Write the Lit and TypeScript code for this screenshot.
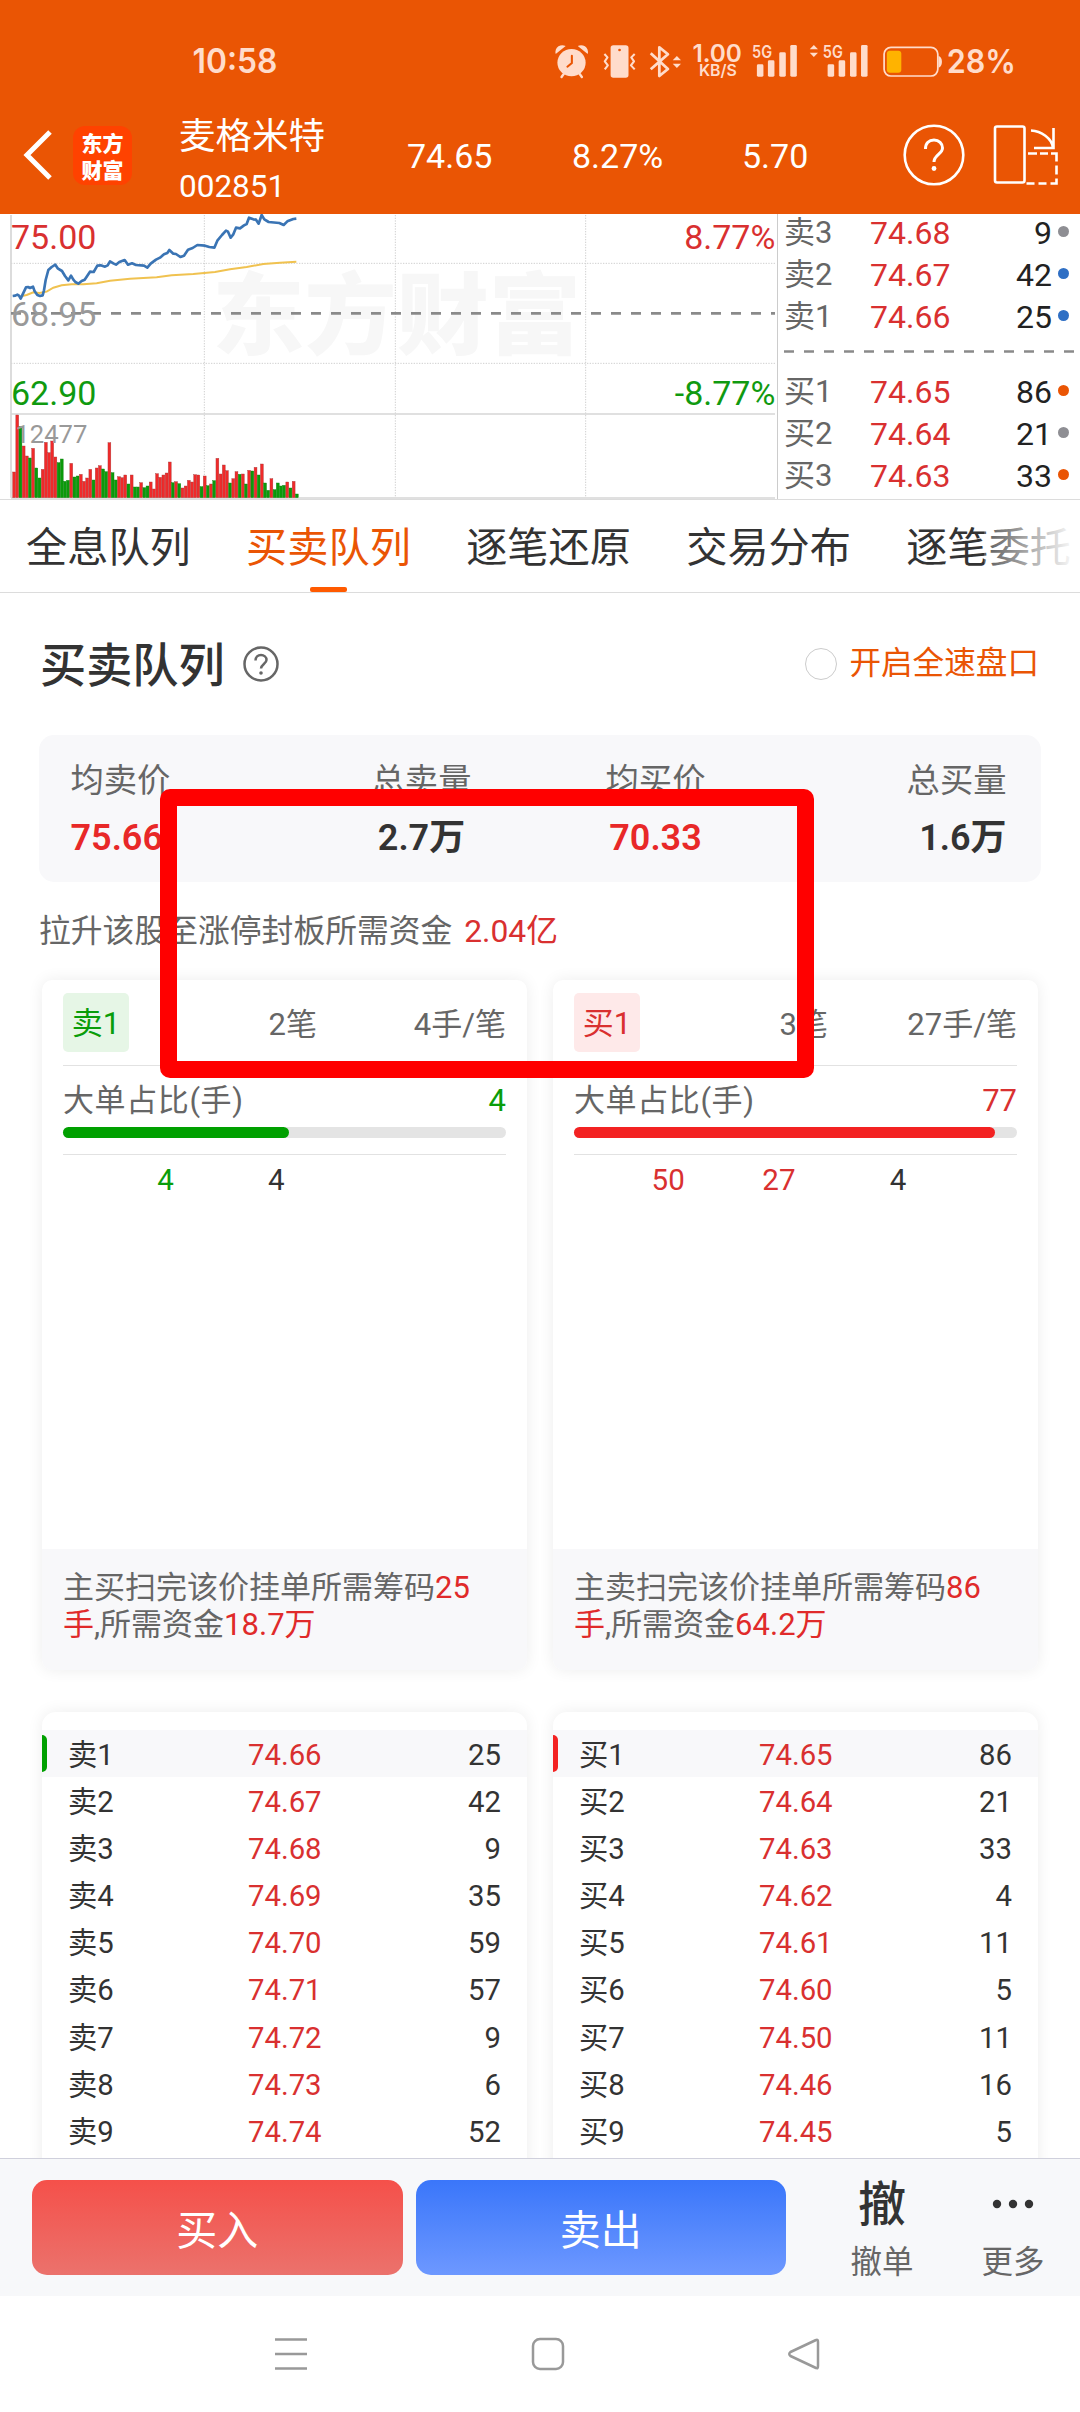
import { LitElement, html, svg, css } from "lit";
import { customElement, property } from "lit/decorators.js";
import { classMap } from "lit/directives/class-map.js";

type Level = { name: string; price: string; qty: string; dot?: string };

const ASKS: Level[] = [
  { name: "卖3", price: "74.68", qty: "9", dot: "#8e8e93" },
  { name: "卖2", price: "74.67", qty: "42", dot: "#2f6fc4" },
  { name: "卖1", price: "74.66", qty: "25", dot: "#2f6fc4" },
];
const BIDS: Level[] = [
  { name: "买1", price: "74.65", qty: "86", dot: "#ea5504" },
  { name: "买2", price: "74.64", qty: "21", dot: "#8e8e93" },
  { name: "买3", price: "74.63", qty: "33", dot: "#ea5504" },
];

const levels = (side: string, rows: [string, string][]): Level[] =>
  rows.map(([price, qty], i) => ({ name: `${side}${i + 1}`, price, qty }));

const ASK_LEVELS = levels("卖", [
  ["74.66", "25"], ["74.67", "42"], ["74.68", "9"], ["74.69", "35"], ["74.70", "59"],
  ["74.71", "57"], ["74.72", "9"], ["74.73", "6"], ["74.74", "52"],
]);
const BID_LEVELS = levels("买", [
  ["74.65", "86"], ["74.64", "21"], ["74.63", "33"], ["74.62", "4"], ["74.61", "11"],
  ["74.60", "5"], ["74.50", "11"], ["74.46", "16"], ["74.45", "5"],
]);

// Volume per minute: r = up, g = down, number = top edge of the bar.
const VOLUME =
  "r801 r630 g665 r723 r753 g759 r730 g789 g819 r793 r712 r743 r708 r756 g773 g762 g829 g826 r775 g816 " +
  "g813 r808 r829 r819 r793 g825 r789 r782 g792 g800 r713 g803 g825 r815 r818 r810 g837 r810 g846 g846 " +
  "r833 g848 g843 r831 r852 r806 r817 r810 r804 r771 g833 r830 g836 r849 r843 r826 r831 r809 r810 g845 " +
  "r813 g842 r837 g827 r760 r807 r780 r797 g834 r821 r800 g808 r807 g837 r796 g798 r787 g810 r777 g834 " +
  "g856 r821 g854 g834 g843 g841 r831 g849 r829 g867";

const PRICE_LINE =
  "38,273 46,272 52,269 57,272 62,281 68,268 78,247 84,246 90,249 99,245 104,259 112,270 120,273 128,271 132,256 137,225 145,195 155,186 166,179 173,190 186,198 195,213 205,226 213,212 220,224 226,231 235,236 245,228 254,224 262,212 270,200 281,201 292,182 302,181 315,185 323,181 330,169 340,175 348,179 358,171 374,165 384,179 396,175 408,180 432,182 442,188 452,176 468,164 480,158 492,148 502,144 508,135 520,146 528,147 541,156 552,152 564,134 578,129 592,120 615,122 628,126 643,128 652,107 666,90 678,77 684,80 692,98 700,88 708,68 720,70 732,61 740,57 747,38 760,43 768,44 776,56 785,30 793,43 806,51 838,54 851,60 862,49 880,42 889,41";
const AVG_LINE =
  "66,273 80,270 100,262 118,264 140,260 160,248 185,241 215,238 250,238 290,235 330,227 390,221 470,217 515,211 580,207 645,201 690,193 740,186 790,177 840,173 889,170";

@customElement("app-status")
export class AppStatus extends LitElement {
  static styles = css`
    :host { display: flex; height: 107px; box-sizing: border-box; padding: 43px 0 0 193px; color: #ffdfcf; }
    .time { width: 362px; }
    svg { display: block; fill: #ffdccb; overflow: visible; }
    .line { fill: none; stroke: #ffdccb; }
    text { font-family: Inter, Roboto, sans-serif; font-weight: 600; }
  `;

  private icon(from: number, to: number, body: unknown) {
    return html`<svg width=${(to - from) / 2.904} height="37" viewBox="${from} 130 ${to - from} 111"
      preserveAspectRatio="none">${body}</svg>`;
  }
  private arrows(x: number, y: number) {
    return svg`<path d="M${x - 12} ${y - 5} L${x} ${y - 18} L${x + 12} ${y - 5} Z M${x - 12} ${y + 5} L${x} ${y + 18} L${x + 12} ${y + 5} Z"/>`;
  }
  private signal(x: number) {
    return svg`
      <text x=${x - 14} y="174" font-size="51" textLength="58" lengthAdjust="spacingAndGlyphs">5G</text>
      <rect x=${x} y="194" width="19" height="37" rx="4"/>
      <rect x=${x + 32} y="182" width="19" height="49" rx="4"/>
      <rect x=${x + 65} y="158" width="19" height="73" rx="4"/>
      <rect x=${x + 97} y="136" width="19" height="95" rx="4"/>`;
  }

  render() {
    return html`
      <div class="time"><svg width="90" height="37" viewBox="0 0 90 37">
        <text x="-0.500" y="30" font-size="33.500" textLength="85" lengthAdjust="spacingAndGlyphs">10:58</text></svg></div>
      ${this.icon(44, 180, svg`
        <circle cx="92" cy="189" r="41"/>
        <path d="M46 163 Q43 148 54 140 Q64 134 75 139 Z M139 163 Q142 148 131 140 Q121 134 110 139 Z"/>
        <path class="line" stroke-width="7" stroke-linecap="round" d="M70 222 L63 232 M115 222 L122 232"/>
        <path d="M93 168 V190 L80 201" fill="none" stroke="#ea5504" stroke-width="6" stroke-linecap="round"/>`)}
      ${this.icon(180, 318, svg`
        <rect x="205" y="137" width="52" height="97" rx="8"/>
        <circle cx="231" cy="151" r="4" fill="#ea5504"/>
        <path class="line" stroke-width="6" stroke-linejoin="round"
          d="M187 163 L196 173 L188 185 L197 197 L188 209 M275 163 L265 173 L273 185 L264 197 L275 209"/>`)}
      ${this.icon(318, 440, svg`
        <path class="line" stroke-width="8" stroke-linejoin="round"
          d="M323 161 L373 208 L348 229 V143 L373 164 L323 209"/>
        ${this.arrows(399, 187)}`)}
      ${this.icon(440, 610, svg`
        <text x="444" y="187" font-size="71" textLength="144" lengthAdjust="spacingAndGlyphs">1.00</text>
        <text x="463" y="230" font-size="48" textLength="110" lengthAdjust="spacingAndGlyphs">KB/S</text>`)}
      ${this.icon(610, 780, this.signal(630))}
      ${this.icon(780, 990, svg`${this.arrows(797, 154)}${this.signal(837)}`)}
      ${this.icon(990, 1180, svg`
        <rect class="line" x="999" y="143" width="156" height="86" rx="20" stroke-width="5"/>
        <rect x="1007" y="153" width="42" height="66" rx="9" fill="#ffb300"/>
        <path d="M1157 168 Q1167 172 1167 186 Q1167 200 1157 204 Z"/>`)}
      ${this.icon(1180, 1400, svg`
        <text x="1182" y="221" font-size="99" textLength="201" lengthAdjust="spacingAndGlyphs">28%</text>`)}
    `;
  }
}

@customElement("app-chart")
export class AppChart extends LitElement {
  static styles = css`
    :host { display: block; width: 777px; height: 285px; }
    svg { display: block; font-family: Roboto, sans-serif; }
    .mark { font: 900 267px "Noto Sans CJK SC", sans-serif; fill: #f7f7f7; }
    .dot { stroke: #cfcfcf; stroke-width: 3; stroke-dasharray: 4 4; }
    .solid { stroke: #d6d6d6; stroke-width: 5; }
    .mid { stroke: #8a8a8a; stroke-width: 8; stroke-dasharray: 30 30; }
    .price { fill: none; stroke: #3a74b4; stroke-width: 8; stroke-linejoin: round; }
    .avg { fill: none; stroke: #f0c250; stroke-width: 6; }
    .r { fill: #f02a2a; stroke: #a83a3a; }
    .g { fill: #0b9a0b; stroke: #0a800a; }
    .bar { stroke-width: 1.2; }
    .big { font-size: 102px; }
    .up { fill: #d93030; }
    .down { fill: #109a10; }
    .flat { fill: #999; }
    .small { font-size: 77px; }
  `;
  render() {
    return html`<svg width="777" height="285" viewBox="0 27 2331 855">
      <text class="mark" x="637" y="425" textLength="1106" lengthAdjust="spacingAndGlyphs">东方财富</text>
      <path class="dot" d="M33 175 H2325 M33 475 H2325 M613 30 V878 M1186 30 V878 M1757 30 V878"/>
      <path class="solid" d="M33 30 V878 M33 627 H2325 M33 879 H2325"/>
      <path class="mid" d="M33 325 H2325"/>
      <polyline class="avg" points=${AVG_LINE}></polyline>
      <polyline class="price" points=${PRICE_LINE}></polyline>
      ${VOLUME.split(" ").map((v, i) => svg`<rect class="bar ${v[0]}" x=${38 + i * 9.53} y=${v.slice(1)}
        width="8.6" height=${878 - Number(v.slice(1))}></rect>`)}
      <text class="big up" x="33" y="132">75.00</text>
      <text class="big flat" x="33" y="362">68.95</text>
      <text class="big down" x="33" y="600">62.90</text>
      <text class="small flat" x="46" y="714">12477</text>
      <text class="big up" x="2326" y="132" text-anchor="end">8.77%</text>
      <text class="big down" x="2326" y="600" text-anchor="end">-8.77%</text>
    </svg>`;
  }
}

@customElement("queue-card")
export class QueueCard extends LitElement {
  @property() side = "sell";
  @property() label = "";
  @property() orders = "";
  @property() average = "";
  @property() big = "";
  @property({ type: Number }) share = 0;
  @property({ type: Array }) lots: { v: string; big: boolean }[] = [];
  @property() action = "";
  @property() hands = "";
  @property() money = "";

  static styles = css`
    :host { display: flex; flex-direction: column; width: 485px; height: 690px; border-radius: 10px; overflow: hidden;
      background: #fff; box-shadow: 0 0 16px rgba(0, 0, 0, .075); color: #666; font-size: 31px; line-height: 38px; }
    .head { display: flex; align-items: center; height: 86px; margin: 0 21px; border-bottom: 1px solid #e2e2e2;
      box-sizing: border-box; }
    .badge { width: 66px; height: 59px; border-radius: 5px; text-align: center; line-height: 61px; }
    .orders { width: 188px; text-align: right; padding-top: 4px; }
    .avg { flex: 1; text-align: right; padding-top: 4px; }
    .ratio { display: flex; justify-content: space-between; margin: 16px 21px 0; height: 45px; }
    .caption { letter-spacing: .6px; }
    .track { margin: 0 21px; height: 11px; border-radius: 6px; background: #e4e4e4; }
    .fill { height: 11px; border-radius: 6px; }
    .lots { display: grid; grid-template-columns: repeat(4, 1fr); margin: 16px 21px 0; padding-top: 6px;
      border-top: 1px solid #e2e2e2; color: #333; text-align: right; font-size: 29.5px; }
    .foot { margin-top: auto; height: 121px; box-sizing: border-box; padding: 20px 30px 0 21px; background: #f8f8fa; line-height: 37px; }
    .red { color: #e02a2a; }
    .sell .num { color: #0a9d0a; }
    .buy .num { color: #d93030; }
    .sell .badge { background: #e6f6e6; color: #0a9d0a; }
    .buy .badge { background: #fee9e9; color: #d93030; }
    .sell .fill { background: #00a000; }
    .buy .fill { background: #f32222; }
    .wrap { display: contents; }
  `;
  render() {
    return html`<div class="wrap ${this.side}">
      <div class="head"><div class="badge">${this.label}</div><div class="orders">${this.orders}</div><div class="avg">${this.average}</div></div>
      <div class="ratio"><span class="caption">大单占比(手)</span><span class="num">${this.big}</span></div>
      <div class="track"><div class="fill" style="width:${this.share}%"></div></div>
      <div class="lots">${this.lots.map((l) => html`<span class=${classMap({ num: l.big })}>${l.v}</span>`)}</div>
      <div class="foot">${this.action}扫完该价挂单所需筹码<span class="red">${this.hands}手</span>,所需资金<span class="red">${this.money}</span></div>
    </div>`;
  }
}

@customElement("level-card")
export class LevelCard extends LitElement {
  @property() side = "sell";
  @property({ type: Array }) rows: Level[] = [];
  static styles = css`
    :host { display: block; width: 485px; height: 500px; box-sizing: border-box; padding-top: 18px; border-radius: 14px; background: #fff;
      box-shadow: 0 0 16px rgba(0, 0, 0, .075); color: #333; font-size: 29.3px; }
    .row { display: flex; height: 47.1px; line-height: 51px; padding: 0 26px 0 21px; border-left: 5px solid transparent; }
    .first { padding-left: 0; border: 0; background: #f8f8fa; }
    .first::before { content: ""; width: 5px; height: 37px; margin: 5px 21px 0 0; border-radius: 0 5px 5px 0; background: #00a000; }
    .first.buy::before { background: #f32222; }
    .name { width: 180px; }
    .price { flex: 1; color: #d93030; }
  `;
  render() {
    return this.rows.map((r, i) => html`<div class="row ${i ? "" : `first ${this.side}`}">
      <span class="name">${r.name}</span><span class="price">${r.price}</span><span>${r.qty}</span></div>`);
  }
}

@customElement("app-root")
export class AppRoot extends LitElement {
  static styles = css`
    :host { display: flex; flex-direction: column; position: relative; width: 1080px; height: 2412px; overflow: hidden;
      background: #fff; color: #333; font-family: Roboto, "Noto Sans CJK SC", sans-serif; }
    svg { display: block; }
    .top { height: 214px; background: #ea5504; }
    .header { display: flex; height: 107px; color: #fff; }
    .back { width: 73px; padding-top: 23px; box-sizing: border-box; }
    .logo { width: 59px; height: 59px; margin: 19px 47px 0 0; border-radius: 12px; background: #ff4200; box-sizing: border-box;
      padding-top: 3px; font: 900 21px/26.5px "Noto Sans CJK SC", sans-serif; text-align: center; }
    .stock { width: 228px; }
    .name { font-size: 36.5px; line-height: 50px; margin-top: 5px; }
    .code { font-size: 31.5px; line-height: 50px; }
    .quote { font-size: 34px; line-height: 98px; }
    .q1 { width: 165px; } .q2 { width: 170px; } .q3 { width: 161px; }
    .tools { padding-top: 15px; }

    .market { display: flex; height: 286px; box-sizing: border-box; border-bottom: 1px solid #dcdcdc; }
    .book { flex: 1; border-left: 1px solid #ccc; padding: 0 11px 0 6px; font-size: 32px; }
    .lvl { display: flex; height: 42px; line-height: 42px; align-items: center; padding-right: 0; }
    .asks { margin-top: -2px; }
    .lvl-name { width: 86px; color: #666; font-size: 31px; }
    .lvl-price { flex: 1; color: #d93030; }
    .lvl-qty { color: #222; }
    .lvl-dot { width: 11px; height: 11px; margin: -4px 0 0 6px; border-radius: 50%; }
    .asks, .bids { padding-right: 0; width: 285px; }
    .split { height: 33px; padding-top: 12px; box-sizing: border-box; }

    .tabs { display: flex; height: 93px; box-sizing: border-box; padding-left: 26px; gap: 55.3px; border-bottom: 1px solid #dcdcdc;
      font-size: 41.2px; line-height: 97px; white-space: nowrap; overflow: hidden; position: relative; }
    .tab { display: flex; flex-direction: column; align-items: center; flex: none; height: 92px; }
    .on { color: #ea5504; }
    .on::after { content: ""; width: 37px; height: 5px; margin-top: -10px; border-radius: 2px; background: #ff5a00; }
    .fade { position: absolute; right: 0; top: 0; width: 96px; height: 90px; background: linear-gradient(90deg, rgba(255,255,255,.2), #fff 96%); }

    .title { display: flex; align-items: center; height: 142px; padding: 0 41px 0 40px; }
    h1 { margin: 0 18.5px 0 0; font-size: 46.2px; font-weight: 500; line-height: 60px; padding-top: 3px; }
    .speed { margin-left: auto; display: flex; align-items: center; gap: 12px; color: #ea5504; font-size: 31.6px; line-height: 40px; }
    .radio { width: 32px; height: 32px; box-sizing: border-box; border: 1.5px solid #ccc; border-radius: 50%; margin-bottom: 1px; }

    .summary { display: grid; grid-template-columns: repeat(4, 234px); height: 147px; margin: 0 39px; padding: 0 31.5px; box-sizing: border-box;
      border-radius: 15px; background: #f8f8fa; text-align: center; }
    .summary > :first-child { text-align: left; }
    .summary > :last-child { text-align: right; }
    .k { margin-top: 26px; font-size: 33.3px; line-height: 40px; color: #666; }
    .v { margin-top: 14px; font-size: 36px; line-height: 46px; font-weight: 600; }
    .v.red { color: #e82828; }
    .red { color: #d93030; }
    .need { height: 98px; line-height: 99px; padding-left: 39px; font-size: 31.8px; color: #666; }
    .need .red { margin-left: 4px; }
    .cards { display: flex; gap: 26px; padding-left: 42px; }
    .levels { margin-top: 42px; height: 446px; clip-path: inset(-20px 0 0 0); }

    .bottom { position: relative; display: flex; height: 138px; box-sizing: border-box; border-top: 1px solid #cfd0dc; background: #f7f8fa;
      padding: 21px 0 0 32px; gap: 13px; }
    .btn { width: 370.5px; height: 95px; border-radius: 15px; color: #fff; font-size: 41px; line-height: 102px; text-align: center; }
    .buy { background: linear-gradient(#f5504a, #eb726c); }
    .sell { background: linear-gradient(#3a76fa, #6d98ff); }
    .act { display: flex; flex-direction: column; align-items: center; font-size: 31.5px; color: #666; line-height: 40px; }
    .cancel { width: 66px; margin-left: 50px; }
    .more { width: 66px; margin-left: 52px; }
    .glyph { height: 63px; font-size: 48px; line-height: 50px; font-weight: 500; color: #333; }
    .nav { flex: 1; display: flex; align-items: flex-start; padding: 41px 0 0 274px; }
    .nav svg + svg { margin-left: 223px; }
    .nav svg + svg + svg { margin-left: 221.5px; }
    .mark { position: absolute; left: 160px; top: 789px; width: 654px; height: 289px; box-sizing: border-box; border: 17.5px solid #f00; border-radius: 10px; }
  `;

  private level(l: Level) {
    return html`<div class="lvl"><span class="lvl-name">${l.name}</span><span class="lvl-price">${l.price}</span>
      <span class="lvl-qty">${l.qty}</span><span class="lvl-dot" style="background:${l.dot}"></span></div>`;
  }

  render() {
    return html`
      <div class="top">
        <app-status></app-status>
        <div class="header">
          <div class="back"><svg width="60" height="52" viewBox="0 0 60 52" fill="none" stroke="#fff" stroke-width="5">
            <path d="M50 2 L27 25 L50 48"/></svg></div>
          <div class="logo">东方<br>财富</div>
          <div class="stock"><div class="name">麦格米特</div><div class="code">002851</div></div>
          <div class="quote q1">74.65</div><div class="quote q2">8.27%</div><div class="quote q3">5.70</div>
          <div class="tools"><svg width="160" height="66" viewBox="0 0 160 66" fill="none" stroke="#fff" stroke-width="2.6">
            <circle cx="31" cy="33" r="29.3"/>
            <path stroke-width="3" d="M22.5 27 C22.5 21 26 18 31 18 C36 18 39.5 21.500 39.500 26 C39.500 32 31 33 31 40"/>
            <circle cx="31" cy="46.500" r="2.400" fill="#fff" stroke="none"/>
            <rect x="92" y="4.500" width="29.500" height="56" rx="2"/>
            <path d="M128 8.500 C138 9 149 16 150 26 M150.500 6 V26 H131"/>
            <path d="M125 31.500 h9 m3 0 h8 m3 0 h5.500 v8 m0 4 v9 m0 4 v5 h-6 m-4 0 h-8 m-4 0 h-8"/>
          </svg></div>
        </div>
      </div>

      <div class="market">
        <app-chart></app-chart>
        <div class="book">
          <div class="asks">${ASKS.map((l) => this.level(l))}</div>
          <div class="split"><svg width="290" height="3"><path d="M0 1.500 H290" stroke="#8a8a8a" stroke-width="2.500" stroke-dasharray="10 10"/></svg></div>
          <div class="bids">${BIDS.map((l) => this.level(l))}</div>
        </div>
      </div>

      <div class="tabs">
        ${["全息队列", "买卖队列", "逐笔还原", "交易分布", "逐笔委托"].map((t, i) => html`<div class=${classMap({ tab: true, on: i === 1 })}>${t}</div>`)}
        <div class="fade"></div>
      </div>

      <div class="title">
        <h1>买卖队列</h1>
        <svg width="36" height="36" viewBox="0 0 36 36" fill="none" stroke="#666" stroke-width="2.500">
          <circle cx="18" cy="18" r="16.500"/>
          <path d="M12.500 14.500 C12.500 11 15 9 18 9 C21 9 23.500 11 23.500 14 C23.500 17.500 18 18.500 18 22.500"/>
          <circle cx="18" cy="27" r="1.800" fill="#666" stroke="none"/></svg>
        <div class="speed"><span class="radio"></span>开启全速盘口</div>
      </div>

      <div class="summary">
        <div><div class="k">均卖价</div><div class="v red">75.66</div></div>
        <div><div class="k">总卖量</div><div class="v">2.7万</div></div>
        <div><div class="k">均买价</div><div class="v red">70.33</div></div>
        <div><div class="k">总买量</div><div class="v">1.6万</div></div>
      </div>
      <div class="need">拉升该股至涨停封板所需资金 <span class="red">2.04亿</span></div>

      <div class="cards">
        <queue-card side="sell" label="卖1" orders="2笔" average="4手/笔" big="4" share="51"
          .lots=${[{ v: "4", big: true }, { v: "4", big: false }]} action="主买" hands="25" money="18.7万"></queue-card>
        <queue-card side="buy" label="买1" orders="3笔" average="27手/笔" big="77" share="95"
          .lots=${[{ v: "50", big: true }, { v: "27", big: true }, { v: "4", big: false }]} action="主卖" hands="86" money="64.2万"></queue-card>
      </div>
      <div class="cards levels">
        <level-card side="sell" .rows=${ASK_LEVELS}></level-card>
        <level-card side="buy" .rows=${BID_LEVELS}></level-card>
      </div>

      <div class="bottom">
        <div class="btn buy">买入</div>
        <div class="btn sell">卖出</div>
        <div class="act cancel"><div class="glyph">撤</div>撤单</div>
        <div class="act more"><div class="glyph"><svg width="42" height="46" fill="#333"><circle cx="5" cy="24" r="4.200"/><circle cx="21" cy="24" r="4.200"/><circle cx="37" cy="24" r="4.200"/></svg></div>更多</div>
      </div>
      <div class="nav">
        <svg width="34" height="34" stroke="#999" stroke-width="2.600"><path d="M1 2.500 H33 M1 17 H33 M1 31.500 H33"/></svg>
        <svg width="34" height="34" fill="none" stroke="#999" stroke-width="2.500"><rect x="2" y="2" width="30" height="30" rx="7"/></svg>
        <svg width="34" height="34" fill="none" stroke="#999" stroke-width="2.500" stroke-linejoin="round"><path d="M29 3 Q31 2 31 5 V29 Q31 32 29 31 L3.500 19 Q1 17 3.500 15 Z"/></svg>
      </div>
      <div class="mark"></div>
    `;
  }
}
